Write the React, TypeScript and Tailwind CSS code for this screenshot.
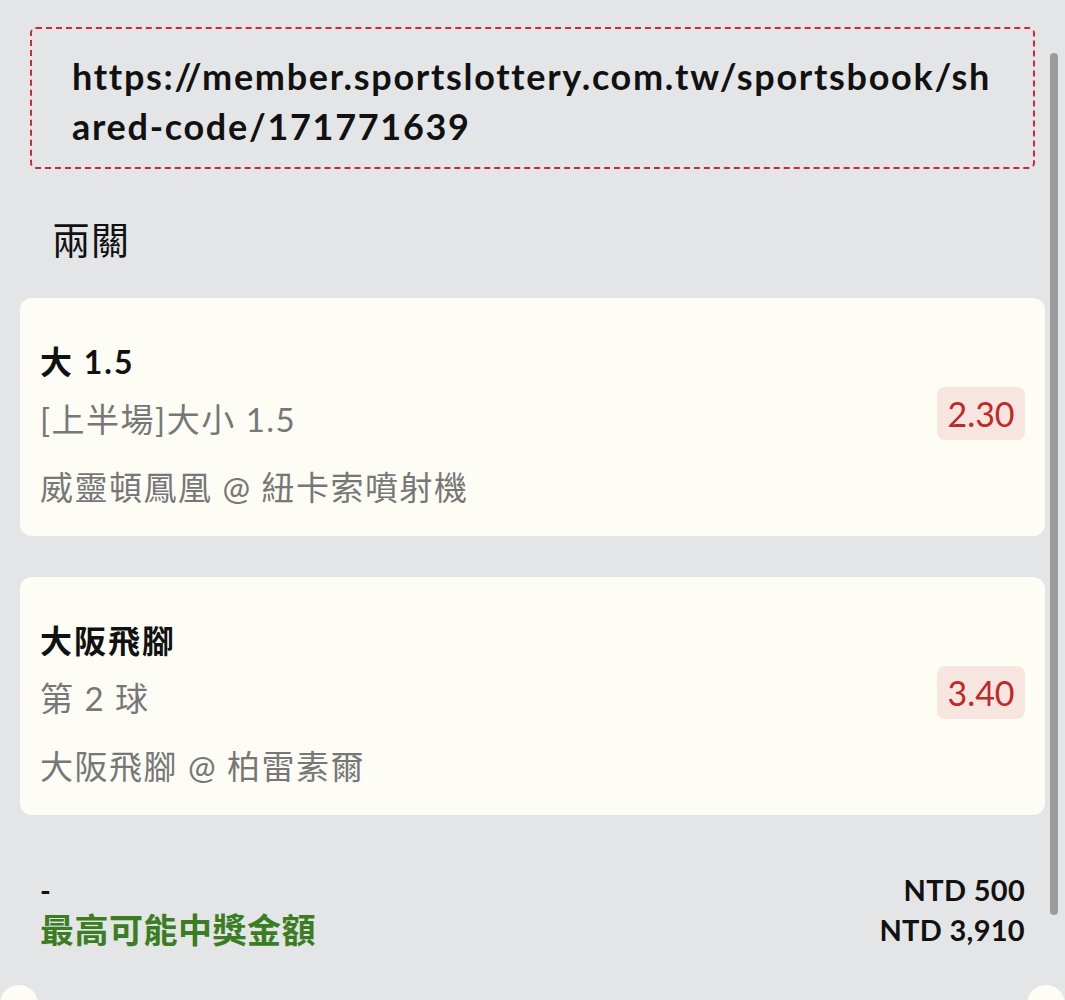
// Parlay share sheet: shared link, legs and payout summary.

const LATIN = "font-['Lato','Noto_Sans_CJK_TC',sans-serif]";

interface Leg {
  pick: string;
  market: string;
  match: string;
  odds: string;
}

const LEGS: Leg[] = [
  { pick: "大 1.5", market: "[上半場]大小 1.5", match: "威靈頓鳳凰 @ 紐卡索噴射機", odds: "2.30" },
  { pick: "大阪飛腳", market: "第 2 球", match: "大阪飛腳 @ 柏雷素爾", odds: "3.40" },
];

function LegCard({ leg }: { leg: Leg }) {
  return (
    <div className="flex items-center justify-between rounded-xl bg-[#fdfdf5] pl-5 pr-5">
      <div className="flex flex-col pt-[44px] pb-[29px]">
        <div className="h-10 text-[32px] leading-10 font-bold tracking-[2px] text-[#111]">{leg.pick}</div>
        <div className="mt-[17px] h-10 text-[33px] leading-10 tracking-[1.5px] text-[#777]">{leg.market}</div>
        <div className="mt-[28px] h-10 text-[33px] leading-10 tracking-[1.5px] text-[#777]">{leg.match}</div>
      </div>
      <div className="mb-[7px] flex h-[53px] w-[88px] items-center justify-center rounded-lg bg-[#f6e6df] text-[34px] text-[#c0282a]">
        {leg.odds}
      </div>
    </div>
  );
}

export default function App() {
  return (
    <div className={`relative h-[1000px] w-full overflow-hidden bg-[#e4e5e7] ${LATIN}`}>
      <div className="flex flex-col px-5 pt-[27px]">
        {/* Shared link */}
        <div className="mx-[10px] rounded-md border-2 border-dashed border-[#d3263a] pl-[40px] pr-[20px] pt-[22px] pb-[16px]">
          <p className="whitespace-nowrap text-[36px] leading-[50px] font-bold tracking-[1.7px] text-[#111]">
            https://member.sportslottery.com.tw/sportsbook/sh
            <br />
            ared-code/171771639
          </p>
        </div>

        {/* Bet type */}
        <div className="mt-[50px] h-10 pl-8 text-[38px] leading-10 tracking-[1px] text-[#111]">兩關</div>

        {/* Legs */}
        <div className="mt-[39px] flex flex-col gap-[41px]">
          {LEGS.map((leg) => (
            <LegCard key={leg.pick} leg={leg} />
          ))}
        </div>

        {/* Summary */}
        <div className="mt-[55px] flex justify-between px-5">
          <div className="flex flex-col">
            <div className="h-10 text-[29px] leading-10 font-bold text-[#111]">-</div>
            <div className="h-10 text-[34px] leading-10 font-bold tracking-[0.5px] text-[#3b7d23]">最高可能中獎金額</div>
          </div>
          <div className="flex flex-col items-end">
            <div className="h-10 text-[29px] leading-10 font-bold tracking-[0.3px] text-[#111]">NTD 500</div>
            <div className="h-10 text-[29px] leading-10 font-bold tracking-[0.3px] text-[#111]">NTD 3,910</div>
          </div>
        </div>
      </div>

      {/* scrollbar thumb */}
      <div className="absolute top-[53px] left-[1050px] h-[862px] w-2 rounded-full bg-[#9b9b9b]" />

      {/* next card peeking */}
      <div className="absolute top-[985px] left-0 h-[38px] w-[38px] rounded-full bg-[#fdfdf5]" />
      <div className="absolute top-[985px] left-[1027px] h-[38px] w-[38px] rounded-full bg-[#fdfdf5]" />
    </div>
  );
}
